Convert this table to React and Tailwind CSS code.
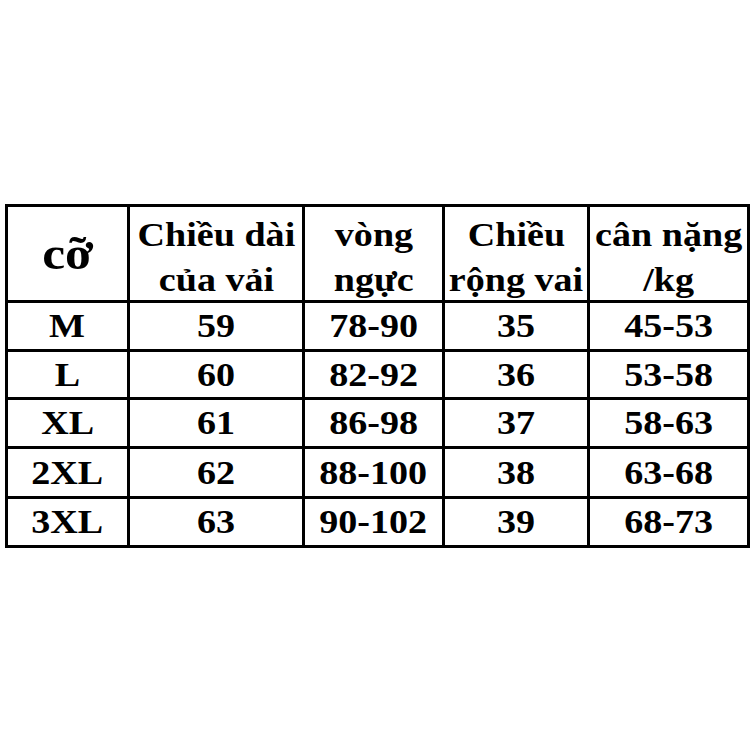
import React from 'react';

const rows = [
  ['M', '59', '78-90', '35', '45-53'],
  ['L', '60', '82-92', '36', '53-58'],
  ['XL', '61', '86-98', '37', '58-63'],
  ['2XL', '62', '88-100', '38', '63-68'],
  ['3XL', '63', '90-102', '39', '68-73'],
];

const rowHeights = ['h-[49px]', 'h-[48px]', 'h-[49px]', 'h-[50px]', 'h-[49px]'];

function T({ children }) {
  return <span className="inline-block scale-x-[1.12] whitespace-nowrap">{children}</span>;
}

function Head({ lines }) {
  return (
    <td className="border-[3px] border-black p-0 text-center align-middle text-[34px] leading-[45px]">
      <div className="translate-y-[3px]">
        {lines.map((l) => (
          <div key={l}>
            <T>{l}</T>
          </div>
        ))}
      </div>
    </td>
  );
}

export default function App() {
  return (
    <div
      className="w-[753px] h-[753px] bg-white pt-[204px] pl-[5px] text-black font-bold"
      style={{ fontFamily: '"Liberation Serif", "Times New Roman", serif' }}
    >
      <table className="border-collapse table-fixed w-[742px]">
        <colgroup>
          <col className="w-[122px]" />
          <col className="w-[175px]" />
          <col className="w-[140px]" />
          <col className="w-[145px]" />
          <col className="w-[160px]" />
        </colgroup>
        <tbody>
          <tr className="h-[96px]">
            <td className="border-[3px] border-black p-0 text-center align-middle text-[46px] leading-none">
              <T>cỡ</T>
            </td>
            <Head lines={['Chiều dài', 'của vải']} />
            <Head lines={['vòng', 'ngực']} />
            <Head lines={['Chiều', 'rộng vai']} />
            <Head lines={['cân nặng', '/kg']} />
          </tr>
          {rows.map((r, i) => (
            <tr key={r[0]} className={rowHeights[i]}>
              {r.map((c, j) => (
                <td
                  key={j}
                  className="border-[3px] border-black p-0 text-center align-middle text-[34px] leading-none"
                >
                  <T>{c}</T>
                </td>
              ))}
            </tr>
          ))}
        </tbody>
      </table>
    </div>
  );
}
